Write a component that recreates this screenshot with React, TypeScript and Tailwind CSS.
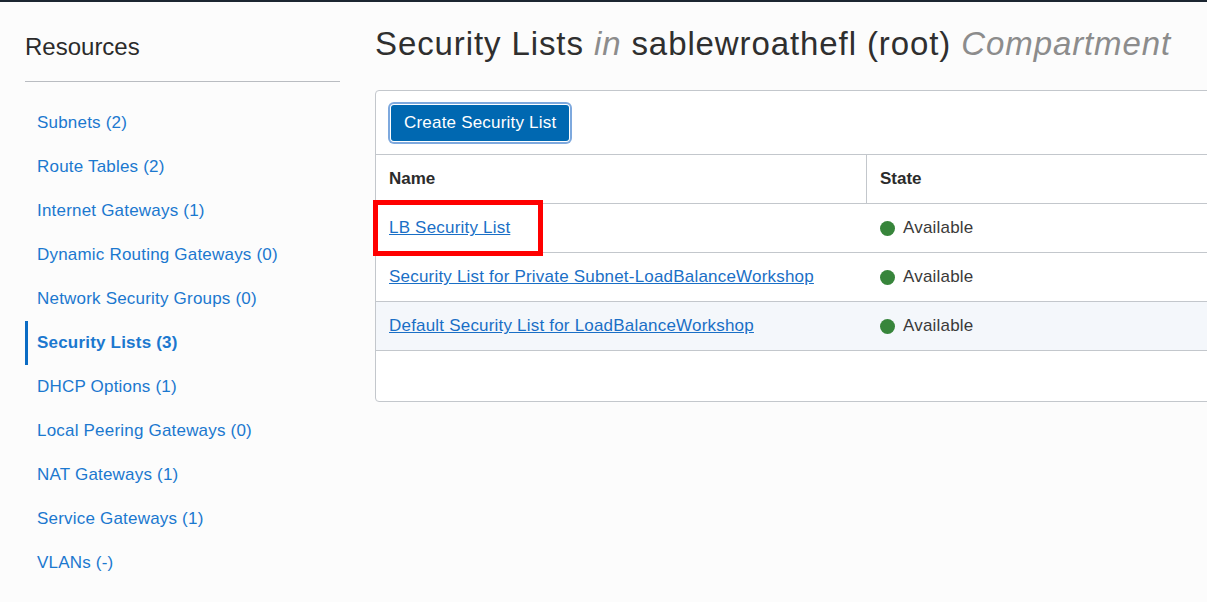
import React from 'react';

const navItems = [
  { label: 'Subnets (2)' },
  { label: 'Route Tables (2)' },
  { label: 'Internet Gateways (1)' },
  { label: 'Dynamic Routing Gateways (0)' },
  { label: 'Network Security Groups (0)' },
  { label: 'Security Lists (3)', active: true },
  { label: 'DHCP Options (1)' },
  { label: 'Local Peering Gateways (0)' },
  { label: 'NAT Gateways (1)' },
  { label: 'Service Gateways (1)' },
  { label: 'VLANs (-)' },
];

const rows = [
  { name: 'LB Security List', highlight: true },
  { name: 'Security List for Private Subnet-LoadBalanceWorkshop' },
  { name: 'Default Security List for LoadBalanceWorkshop', shaded: true },
];

function Sidebar() {
  return (
    <aside className="w-[340px] shrink-0 pl-[25px]">
      <h2 className="pt-[30px] pb-[19px] text-[24px] leading-[30px] text-[#2b2b2b] border-b border-[#b9bcc1]">
        Resources
      </h2>
      <nav className="mt-[19px] flex flex-col">
        {navItems.map((item) => (
          <a
            key={item.label}
            href="#"
            className={`flex h-[44px] items-center text-[17px] tracking-[0.2px] text-[#1b78cf] ${
              item.active
                ? 'border-l-[3px] border-[#0b6cc4] pl-[9px] font-bold text-[#0d6ac0]'
                : 'pl-[12px]'
            }`}
          >
            {item.label}
          </a>
        ))}
      </nav>
    </aside>
  );
}

function StateBadge() {
  return (
    <span className="flex items-center gap-[8px] text-[17px] tracking-[0.2px] text-[#3a3a3a]">
      <span className="h-[15px] w-[15px] rounded-full bg-[#37853b]" />
      Available
    </span>
  );
}

export default function App() {
  return (
    <div
      className="min-h-[602px] w-[1207px] overflow-hidden bg-[#fcfcfc]"
      style={{ fontFamily: '"Liberation Sans", Arial, sans-serif' }}
    >
      <div className="h-[2px] bg-[#1c2631]" />
      <div className="flex">
        <Sidebar />
        <main className="ml-[35px] flex-1">
          <h1 className="pt-[22px] text-[33px] leading-[40px] tracking-[0.9px] text-[#2f2f2f]">
            Security Lists <em className="text-[#8c8c8c]">in</em> sablewroathefl (root){' '}
            <em className="text-[#8c8c8c]">Compartment</em>
          </h1>
          <div className="mt-[26px] w-[860px] rounded-sm border border-[#c3c7cc] bg-white">
            <div className="flex h-[64px] items-center border-b border-[#c3c7cc] pl-[15px]">
              <button className="h-[36px] rounded-[3px] bg-[#0068b1] px-[13px] text-[17px] tracking-[0.2px] text-white ring-2 ring-[#7ea9de] ring-offset-1">
                Create Security List
              </button>
            </div>
            <div className="flex h-[49px] border-b border-[#c3c7cc] text-[17px] font-bold text-[#2b2b2b]">
              <div className="flex w-[491px] items-center border-r border-[#c3c7cc] pl-[13px]">Name</div>
              <div className="flex items-center pl-[13px]">State</div>
            </div>
            {rows.map((row) => (
              <div
                key={row.name}
                className={`flex h-[49px] border-b border-[#c3c7cc] ${row.shaded ? 'bg-[#f4f7fb]' : ''}`}
              >
                <div className="relative flex w-[491px] items-center pl-[13px]">
                  <a href="#" className="text-[17px] tracking-[0.2px] text-[#1a6fc6] underline">
                    {row.name}
                  </a>
                  {row.highlight && (
                    <div className="absolute left-[-3px] top-[-4px] h-[56px] w-[170px] border-[5px] border-[#ff0000]" />
                  )}
                </div>
                <div className="flex items-center pl-[13px]">
                  <StateBadge />
                </div>
              </div>
            ))}
            <div className="h-[50px]" />
          </div>
        </main>
      </div>
    </div>
  );
}
